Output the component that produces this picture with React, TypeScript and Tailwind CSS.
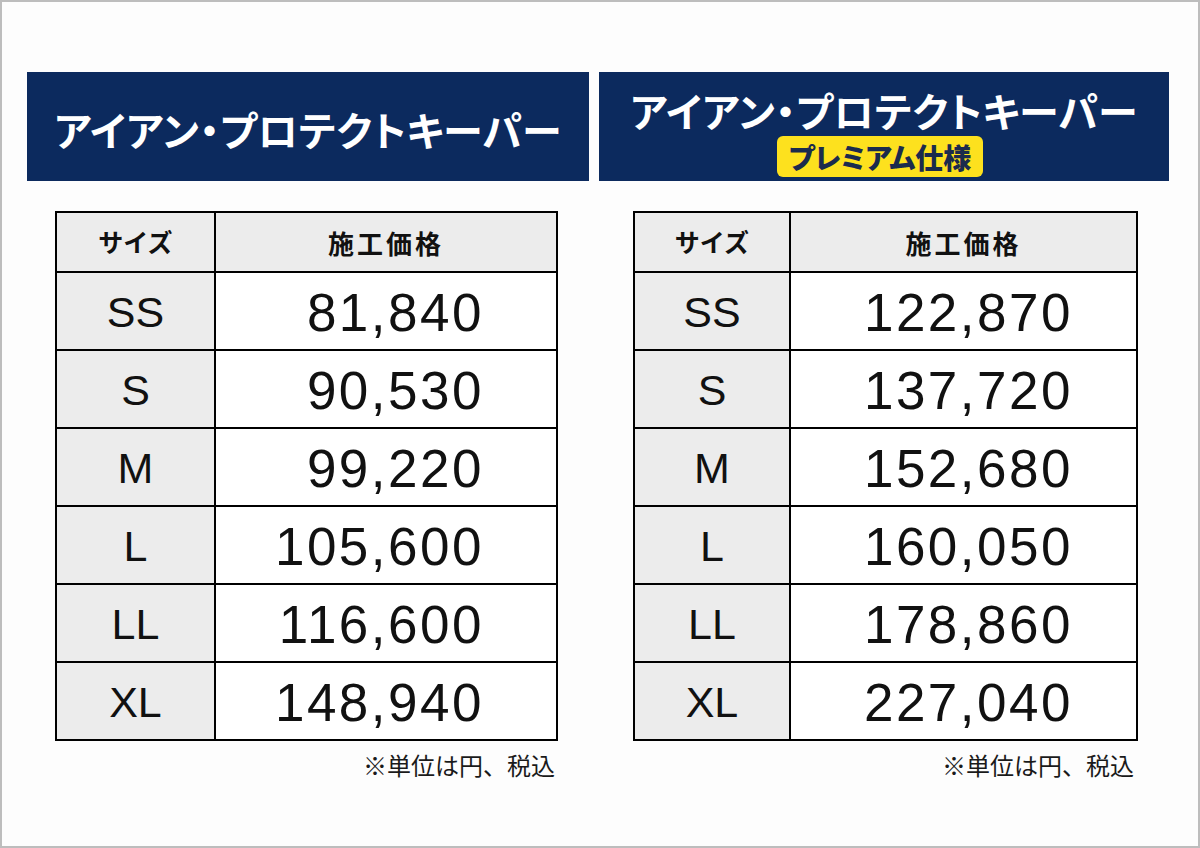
import React from "react";

const jp = "font-['Noto_Sans_CJK_JP','Noto_Sans',sans-serif]";
const num = "font-['Liberation_Sans','Arial',sans-serif]";

type Row = { size: string; price: string };

const left: Row[] = [
  { size: "SS", price: "81,840" },
  { size: "S", price: "90,530" },
  { size: "M", price: "99,220" },
  { size: "L", price: "105,600" },
  { size: "LL", price: "116,600" },
  { size: "XL", price: "148,940" },
];

const right: Row[] = [
  { size: "SS", price: "122,870" },
  { size: "S", price: "137,720" },
  { size: "M", price: "152,680" },
  { size: "L", price: "160,050" },
  { size: "LL", price: "178,860" },
  { size: "XL", price: "227,040" },
];

function PriceTable({ rows, variant }: { rows: Row[]; variant: "left" | "right" }) {
  const sizeW = variant === "left" ? "w-[159px]" : "w-[156px]";
  const pr = variant === "left" ? "pr-[72px]" : "pr-[63px]";
  return (
    <div className="border-2 border-black bg-white">
      <div className="flex h-[58px] bg-[#ececec]">
        <div className={`${sizeW} shrink-0 border-r-2 border-black flex items-center justify-center ${jp} font-bold text-[25px] text-[#111]`}>
          サイズ
        </div>
        <div className={`flex-1 flex items-center justify-center ${jp} font-bold text-[26px] tracking-[3px] text-[#111]`}>
          施工価格
        </div>
      </div>
      {rows.map((r) => (
        <div key={r.size} className="flex h-[78px] border-t-2 border-black">
          <div className={`${sizeW} shrink-0 border-r-2 border-black bg-[#ececec] flex items-center justify-center ${num} text-[43px] text-[#111] pt-[2px]`}>
            {r.size}
          </div>
          <div className={`flex-1 bg-white flex items-center justify-end ${pr} ${num} text-[53px] tracking-[2.5px] text-[#111] pt-[4px]`}>
            {r.price}
          </div>
        </div>
      ))}
    </div>
  );
}

export default function App() {
  return (
    <div className="w-[1200px] h-[848px] bg-[#fdfdfd] border-2 border-[#bdbdbd] pt-[70px] pl-[25px]">
      <div className="flex gap-[10px]">
        <div className="w-[562px] shrink-0">
          <div className="h-[109px] bg-[#0c2a5e] flex items-center justify-center">
            <div className={`${jp} font-bold text-white text-[40px] leading-none [font-feature-settings:'palt'] tracking-[0.5px] pt-[4px]`}>
              アイアン・プロテクトキーパー
            </div>
          </div>
          <div className="mt-[30px] ml-[28px] w-[503px]">
            <PriceTable rows={left} variant="left" />
            <div className={`mt-[10px] pr-[3px] text-right ${jp} text-[24px] leading-[28px] text-[#1a1a1a]`}>
              ※単位は円、税込
            </div>
          </div>
        </div>
        <div className="w-[570px] shrink-0">
          <div className="h-[109px] bg-[#0c2a5e] flex flex-col items-center justify-end pb-[4px]">
            <div className={`${jp} font-bold text-white text-[40px] leading-[42px] [font-feature-settings:'palt'] tracking-[0.5px]`}>
              アイアン・プロテクトキーパー
            </div>
            <div className={`mt-[5px] h-[41px] w-[206px] rounded-[6px] bg-[#fde11e] flex items-center justify-center ${jp} font-black text-[28px] leading-none text-[#1b2b4d] [font-feature-settings:'palt'] ml-[-8px]`}>
              プレミアム仕様
            </div>
          </div>
          <div className="mt-[30px] ml-[34px] w-[505px]">
            <PriceTable rows={right} variant="right" />
            <div className={`mt-[10px] pr-[4px] text-right ${jp} text-[24px] leading-[28px] text-[#1a1a1a]`}>
              ※単位は円、税込
            </div>
          </div>
        </div>
      </div>
    </div>
  );
}
